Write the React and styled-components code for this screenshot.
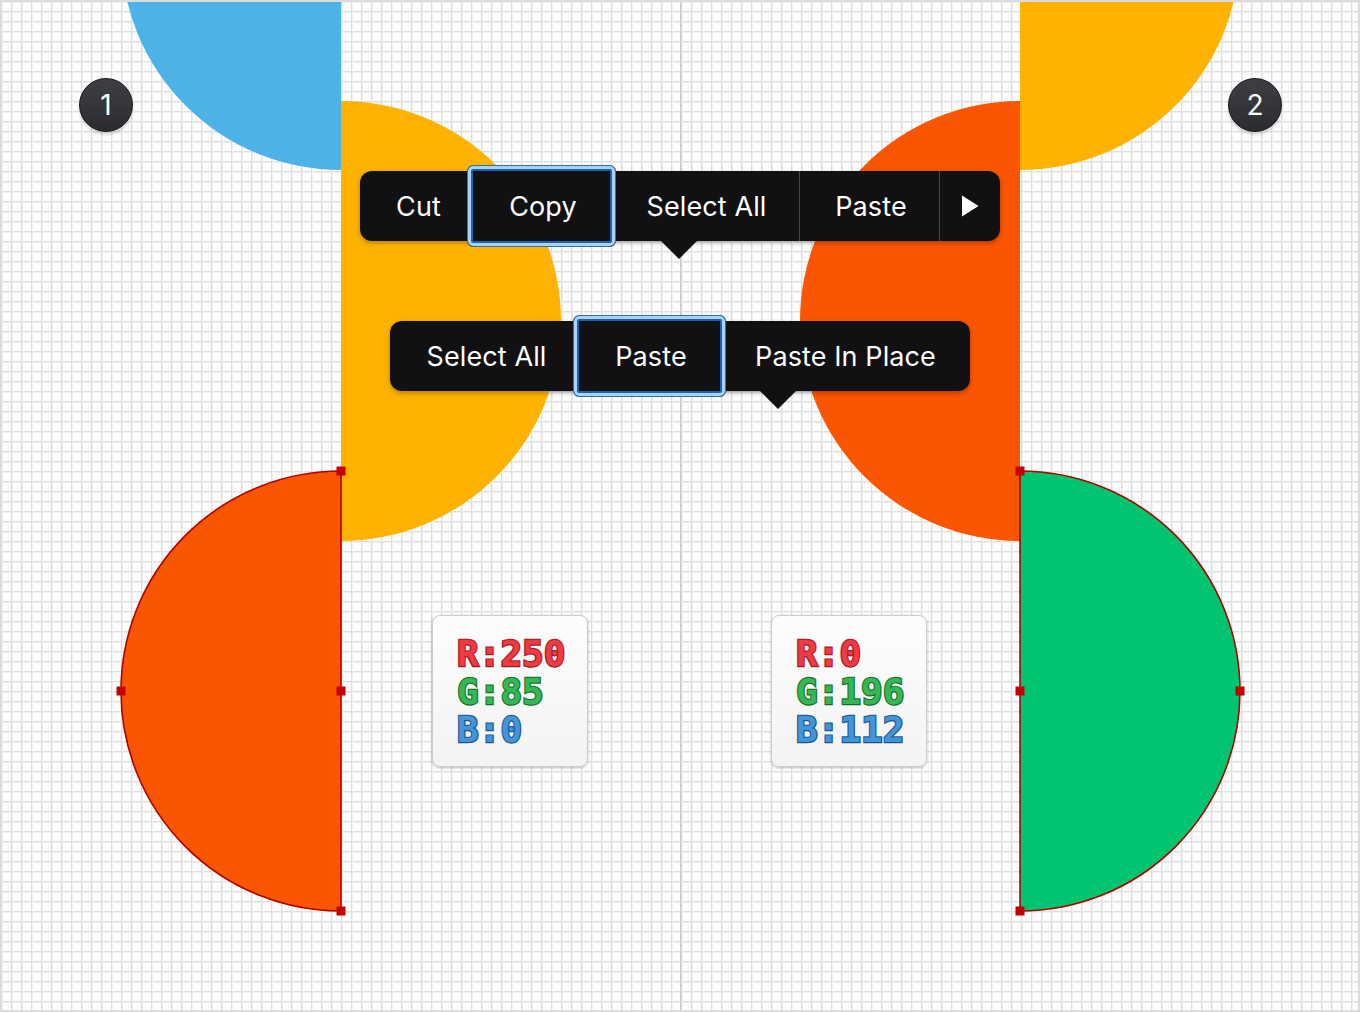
import React from 'react';
import styled, { createGlobalStyle } from 'styled-components';

const Global = createGlobalStyle`
  html, body { margin: 0; padding: 0; background: #fff; }
  body { font-family: Inter, "Noto Sans", sans-serif; }
`;

const Canvas = styled.div`
  position: relative;
  width: 1360px;
  height: 1012px;
  overflow: hidden;
  background-color: #fff;
  background-image:
    linear-gradient(to right, #dedede 0, #dedede 1px, #f0f0f0 1px, #f0f0f0 2px, transparent 2px),
    linear-gradient(to bottom, #dedede 0, #dedede 1px, #f0f0f0 1px, #f0f0f0 2px, transparent 2px);
  background-size: 10px 10px;
  background-position: 1px 1px;
`;

const Frame = styled.div`
  position: absolute;
  inset: 0;
  border: 2px solid #dcdcdc;
  pointer-events: none;
  z-index: 20;
`;

const Guide = styled.div`
  position: absolute;
  left: 680px;
  top: 0;
  bottom: 0;
  width: 1px;
  background: #c8c8c8;
`;

const Art = styled.svg`
  position: absolute;
  left: 0;
  top: 0;
`;

const Menu = styled.div`
  position: absolute;
  left: ${(p) => p.$x}px;
  top: ${(p) => p.$y}px;
  display: flex;
  height: 70px;
  background: #111114;
  border-radius: 12px;
  box-shadow: 0 2px 5px rgba(0, 0, 0, 0.3);
  z-index: 5;

  &::after {
    content: '';
    position: absolute;
    left: ${(p) => p.$tip - 18}px;
    bottom: -18px;
    border-left: 18px solid transparent;
    border-right: 18px solid transparent;
    border-top: 18px solid #111114;
  }
`;

const Item = styled.div`
  position: relative;
  box-sizing: border-box;
  width: ${(p) => p.$w}px;
  display: flex;
  align-items: center;
  justify-content: center;
  padding-left: ${(p) => Math.max(0, p.$shift * 2)}px;
  padding-right: ${(p) => Math.max(0, -p.$shift * 2)}px;
  color: #fff;
  font-family: Inter, "Noto Sans", sans-serif;
  font-size: 27px;
  letter-spacing: 0.1px;
  border-left: ${(p) => (p.$divider ? '1px solid #4a4a4e' : 'none')};

  &::before {
    content: '';
    display: ${(p) => (p.$selected ? 'block' : 'none')};
    position: absolute;
    left: 0;
    right: 0;
    top: -6px;
    bottom: -6px;
    border-radius: 6px;
    border: 1px solid #2f6fb3;
    background: #111114;
    box-shadow: inset 0 0 0 3px #a6d3f7, inset 0 0 0 5px #1c62af;
  }
`;

const Label = styled.span`
  position: relative;
  z-index: 1;
`;

const Badge = styled.div`
  position: absolute;
  left: ${(p) => p.$x - 27}px;
  top: ${(p) => p.$y - 27}px;
  width: 54px;
  height: 54px;
  box-sizing: border-box;
  border-radius: 50%;
  background: linear-gradient(#3e3f44, #2b2c30);
  border: 1.5px solid #17171a;
  box-shadow: 0 3px 3px rgba(0, 0, 0, 0.15);
  color: #fff;
  font-family: Inter, "Noto Sans", sans-serif;
  font-size: 28px;
  display: flex;
  align-items: center;
  justify-content: center;
`;

const Swatch = styled.div`
  position: absolute;
  left: ${(p) => p.$x}px;
  top: 615px;
  width: 156px;
  height: 152px;
  box-sizing: border-box;
  padding: 19px 0 0 24px;
  display: flex;
  flex-direction: column;
  border-radius: 8px;
  border: 1px solid #cbcbcb;
  background: linear-gradient(#fdfdfd, #f3f3f3);
  box-shadow: 0 1px 3px rgba(0, 0, 0, 0.25);
`;

const Channel = styled.div`
  font-family: "DejaVu Sans Mono", "Liberation Mono", monospace;
  font-weight: 700;
  font-size: 36px;
  line-height: 38px;
  color: ${(p) => p.$fill};
  -webkit-text-stroke: 2.4px ${(p) => p.$stroke};
  paint-order: stroke fill;
  text-shadow: 0 1px 1px rgba(0, 0, 0, 0.15);
  white-space: nowrap;
`;

const channelColors = {
  R: ['#ee3a44', '#b0202a'],
  G: ['#34b853', '#1c7a33'],
  B: ['#4495d8', '#235f99'],
};

const half = (cx, cy, r, side) =>
  `M${cx},${cy - r} A${r},${r} 0 0 ${side === 'right' ? 1 : 0} ${cx},${cy + r} Z`;

const handles = [
  [341, 471], [341, 691], [341, 911], [121, 691],
  [1020, 471], [1020, 691], [1020, 911], [1240, 691],
];

const menu1 = [
  { t: 'Cut', w: 107, s: 5 },
  { t: 'Copy', w: 149, sel: true, s: 1.5 },
  { t: 'Select All', w: 183, s: -1 },
  { t: 'Paste', w: 140, div: true, s: 1.5 },
  { t: 'arrow', w: 61, div: true, s: 0 },
];

const menu2 = [
  { t: 'Select All', w: 183, s: 5 },
  { t: 'Paste', w: 153, sel: true, s: 1.5 },
  { t: 'Paste In Place', w: 244, s: -2.5 },
];

const renderItems = (items) =>
  items.map((it, i) => (
    <Item key={i} $w={it.w} $selected={it.sel} $divider={it.div} $shift={it.s}>
      <Label>
        {it.t === 'arrow' ? (
          <svg width="18" height="22" viewBox="0 0 18 22" style={{ display: 'block' }}>
            <polygon points="1,0.5 17.5,11 1,21.5" fill="#fff" />
          </svg>
        ) : (
          it.t
        )}
      </Label>
    </Item>
  ));

const Values = ({ x, vals }) => (
  <Swatch $x={x}>
    {['R', 'G', 'B'].map((k, i) => (
      <Channel key={k} $fill={channelColors[k][0]} $stroke={channelColors[k][1]}>
        {k}:{vals[i]}
      </Channel>
    ))}
  </Swatch>
);

export default function App() {
  return (
    <>
      <Global />
      <Canvas>
        <Guide />
        <Art width="1360" height="1012" viewBox="0 0 1360 1012">
          <path d={half(341, -50, 220, 'left')} fill="#4db3e7" />
          <path d={half(341, 321, 220, 'right')} fill="#ffb300" />
          <path d={half(341, 691, 220, 'left')} fill="#fa5500" stroke="#b30000" strokeWidth="1.6" />
          <path d={half(1020, -50, 220, 'right')} fill="#ffb300" />
          <path d={half(1020, 321, 220, 'left')} fill="#fa5500" />
          <path d={half(1020, 691, 220, 'right')} fill="#00c470" stroke="#b30000" strokeWidth="1.6" />
          {handles.map(([x, y], i) => (
            <rect key={i} x={x - 4.5} y={y - 4.5} width="9" height="9" fill="#c40000" />
          ))}
        </Art>
        <Badge $x={106} $y={105}>1</Badge>
        <Badge $x={1255} $y={105}>2</Badge>
        <Menu $x={360} $y={171} $tip={319}>{renderItems(menu1)}</Menu>
        <Menu $x={390} $y={321} $tip={388}>{renderItems(menu2)}</Menu>
        <Values x={432} vals={['250', '85', '0']} />
        <Values x={771} vals={['0', '196', '112']} />
        <Frame />
      </Canvas>
    </>
  );
}
